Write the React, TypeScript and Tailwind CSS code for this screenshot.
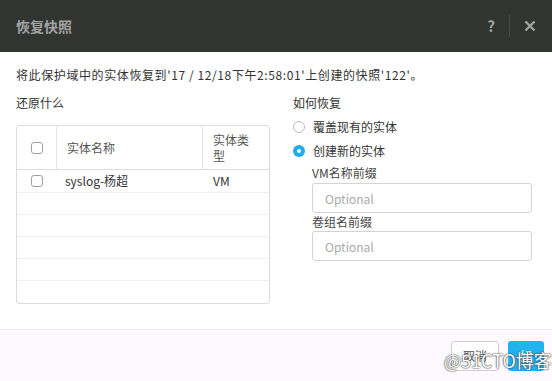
import React from "react";

const font = {
  fontFamily: '"Noto Sans CJK SC", "Noto Sans", "Liberation Sans", sans-serif',
};

const Checkbox = () => (
  <span className="inline-block h-[12px] w-[12px] rounded-[3px] border border-[#9aa0a6] bg-white" />
);

const Radio = ({ checked }: { checked?: boolean }) =>
  checked ? (
    <span className="flex h-[12px] w-[12px] items-center justify-center rounded-full bg-[#22aaf0]">
      <span className="h-[4px] w-[4px] rounded-full bg-white" />
    </span>
  ) : (
    <span className="inline-block h-[12px] w-[12px] rounded-full border border-[#b8bcc2] bg-white" />
  );

const App = () => {
  const emptyRows = [0, 1, 2, 3, 4];
  return (
    <div
      className="relative flex h-[381px] w-[552px] flex-col bg-white text-[12px] text-[#333]"
      style={font}
    >
      <div className="flex h-[52px] items-center bg-[#323432] pl-[16px] pr-[14px]">
        <h1 className="flex-1 text-[14px] font-bold text-[#a3a3a3]">恢复快照</h1>
        <span className="text-[15px] font-bold text-[#a3a3a3]">?</span>
        <span className="mx-[14px] h-[22px] w-px bg-[#4a4c4a]" />
        <svg width="12" height="12" viewBox="0 0 12 12" className="mr-[2px]">
          <path d="M1.5 1.5 L10.5 10.5 M10.5 1.5 L1.5 10.5" stroke="#a3a3a3" strokeWidth="2.4" />
        </svg>
      </div>

      <div className="flex-1 px-[16px] pt-[14px]">
        <p className="leading-[18px] tracking-[0.6px]">
          将此保护域中的实体恢复到'17 / 12/18下午2:58:01'上创建的快照'122'。
        </p>
        <div className="mt-[10px] flex">
          <div className="w-[254px]">
            <p className="leading-[18px]">还原什么</p>
            <div className="mt-[13px] overflow-hidden rounded-[3px] border border-[#dcdcdc]">
              <div className="flex h-[44px] border-b border-[#dcdcdc] text-[#555]">
                <div className="flex w-[40px] items-center justify-center border-r border-[#e6e6e6]">
                  <Checkbox />
                </div>
                <div className="flex w-[146px] items-center border-r border-[#e6e6e6] pl-[10px]">
                  实体名称
                </div>
                <div className="flex flex-1 flex-col justify-center pl-[10px] leading-[16px]">
                  <span>实体类</span>
                  <span>型</span>
                </div>
              </div>
              <div className="flex h-[23px] items-center border-b border-[#f0f0f0]">
                <div className="flex w-[40px] justify-center">
                  <Checkbox />
                </div>
                <div className="w-[146px] pl-[8px]">syslog-杨超</div>
                <div className="flex-1 pl-[10px]">VM</div>
              </div>
              {emptyRows.map((r) => (
                <div
                  key={r}
                  className={`h-[22px] ${r < 4 ? "border-b border-[#f0f0f0]" : ""}`}
                />
              ))}
            </div>
          </div>
          <div className="ml-[23px] w-[239px]">
            <p className="leading-[18px]">如何恢复</p>
            <label className="mt-[4px] flex h-[22px] items-center gap-[8px]">
              <Radio />
              <span>覆盖现有的实体</span>
            </label>
            <label className="mt-[2px] flex h-[22px] items-center gap-[8px]">
              <Radio checked />
              <span>创建新的实体</span>
            </label>
            <div className="mt-[2px] pl-[19px]">
              <p className="leading-[18px] text-[#444]">VM名称前缀</p>
              <input
                placeholder="Optional"
                className="mt-[1px] h-[30px] w-[220px] rounded-[3px] border border-[#d4d4d4] px-[12px] text-[12px] outline-none placeholder:text-[#aaa]"
              />
              <p className="leading-[18px] text-[#444]">卷组名前缀</p>
              <input
                placeholder="Optional"
                className="h-[30px] w-[220px] rounded-[3px] border border-[#d4d4d4] px-[12px] text-[12px] outline-none placeholder:text-[#aaa]"
              />
            </div>
          </div>
        </div>
      </div>

      <div className="flex h-[52px] items-center justify-end gap-[9px] border-t border-[#ececf0] bg-[#fdf9fd] pr-[8px]">
        <button className="h-[30px] w-[48px] rounded-[3px] border border-[#cfcfcf] bg-white text-[#555]">
          取消
        </button>
        <button className="h-[30px] w-[36px] rounded-[3px] bg-[#22b2ee] text-white">好</button>
      </div>

      <span className="pointer-events-none absolute left-[444px] top-[347px] text-[18px] text-white [text-shadow:0_0_2px_#333,0_0_1px_#333]">
        @51CTO博客
      </span>
    </div>
  );
};

export default App;
